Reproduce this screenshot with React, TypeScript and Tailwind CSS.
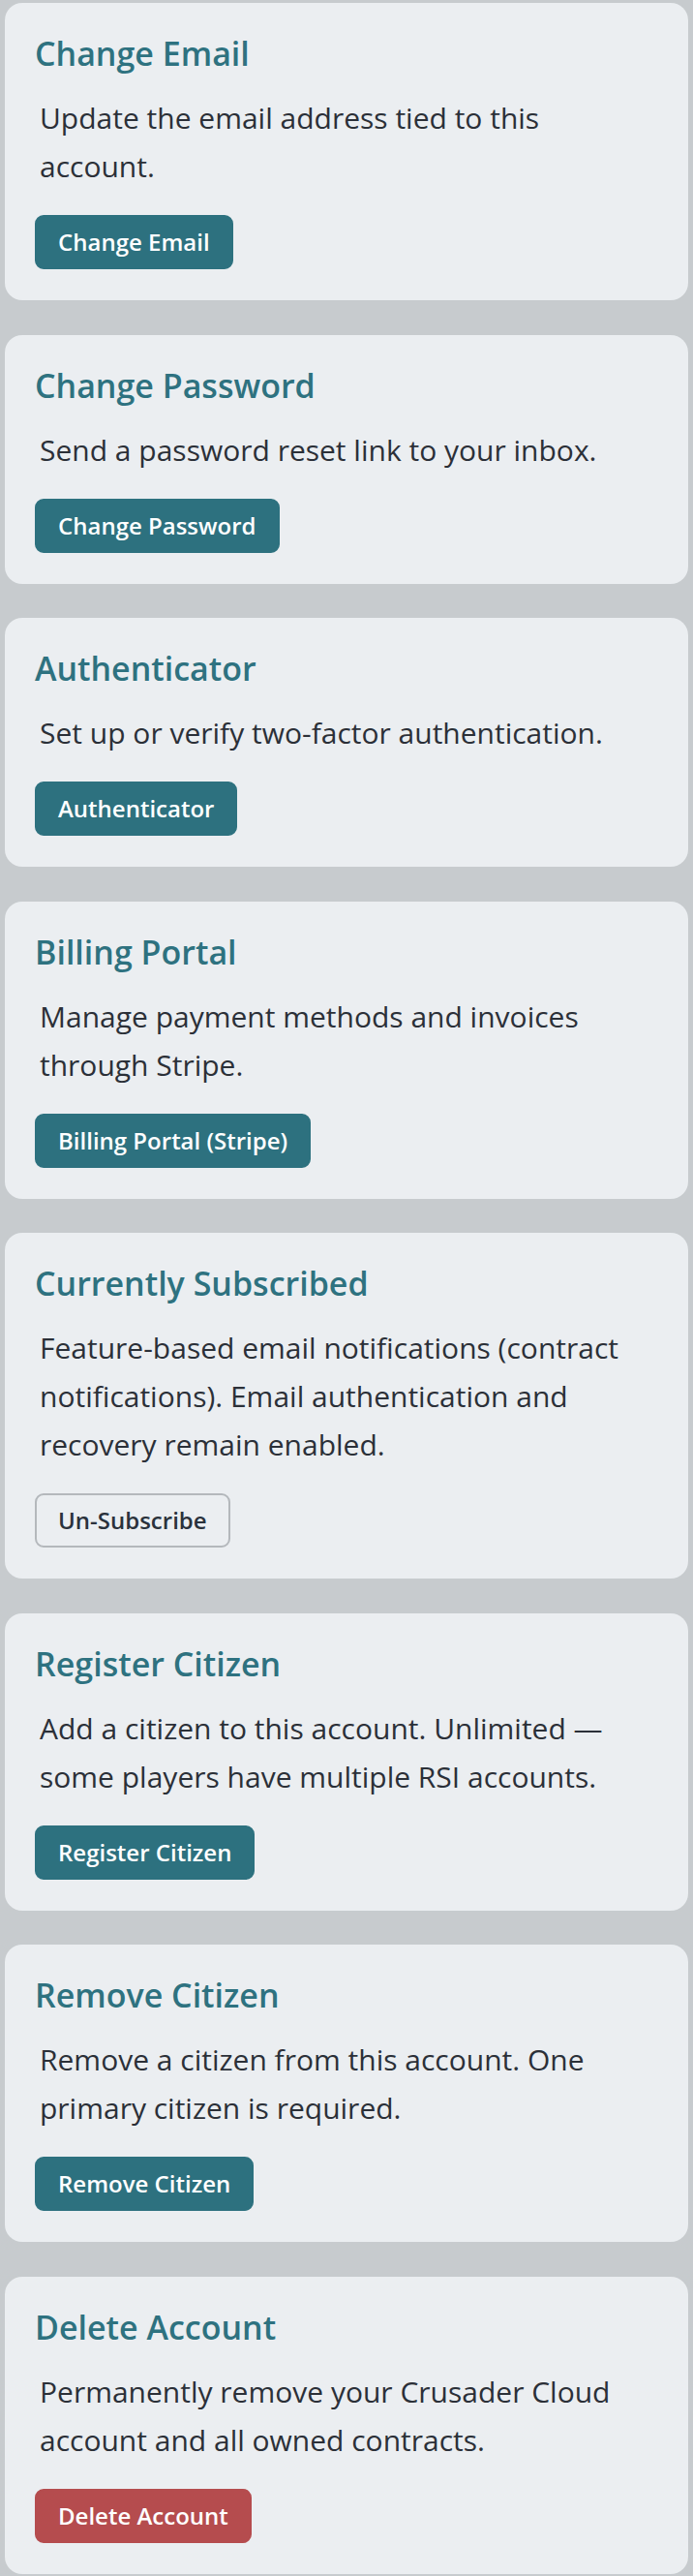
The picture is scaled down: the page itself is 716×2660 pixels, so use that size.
const cards = [
  {
    title: "Change Email",
    body: "Update the email address tied to this account.",
    action: "Change Email",
    kind: "primary",
  },
  {
    title: "Change Password",
    body: "Send a password reset link to your inbox.",
    action: "Change Password",
    kind: "primary",
  },
  {
    title: "Authenticator",
    body: "Set up or verify two-factor authentication.",
    action: "Authenticator",
    kind: "primary",
  },
  {
    title: "Billing Portal",
    body: "Manage payment methods and invoices through Stripe.",
    action: "Billing Portal (Stripe)",
    kind: "primary",
  },
  {
    title: "Currently Subscribed",
    body: "Feature-based email notifications (contract notifications). Email authentication and recovery remain enabled.",
    action: "Un-Subscribe",
    kind: "outline",
  },
  {
    title: "Register Citizen",
    body: "Add a citizen to this account. Unlimited — some players have multiple RSI accounts.",
    action: "Register Citizen",
    kind: "primary",
  },
  {
    title: "Remove Citizen",
    body: "Remove a citizen from this account. One primary citizen is required.",
    action: "Remove Citizen",
    kind: "primary",
  },
  {
    title: "Delete Account",
    body: "Permanently remove your Crusader Cloud account and all owned contracts.",
    action: "Delete Account",
    kind: "danger",
  },
];

const buttonStyles: Record<string, string> = {
  primary: "bg-[#2d717f] text-white border-2 border-[#2d717f]",
  outline: "bg-transparent text-[#2a323c] border-2 border-[#b4b8bc]",
  danger: "bg-[#b54c4e] text-white border-2 border-[#b54c4e]",
};

export default function App() {
  return (
    <div
      className="min-h-[2660px] bg-[#c7cbce] px-[5px] pt-[3px] pb-[4px] flex flex-col gap-[35.5px]"
      style={{ fontFamily: '"Open Sans", "Noto Sans", sans-serif' }}
    >
      {cards.map((card) => (
        <section
          key={card.title}
          className="rounded-[18px] bg-[#ebeef1] pl-[31px] pr-[36px] pt-[32px] pb-[32px]"
        >
          <h2 className="text-[34px] leading-[40px] font-semibold text-[#2e7280]">
            {card.title}
          </h2>
          <p className="mt-[22px] pl-[5px] text-[30px] leading-[50px] text-[#2b3038]">
            {card.body}
          </p>
          <button
            className={
              "mt-[25px] h-[56px] px-[22px] rounded-[9px] text-[24px] font-semibold " +
              buttonStyles[card.kind]
            }
          >
            {card.action}
          </button>
        </section>
      ))}
    </div>
  );
}
